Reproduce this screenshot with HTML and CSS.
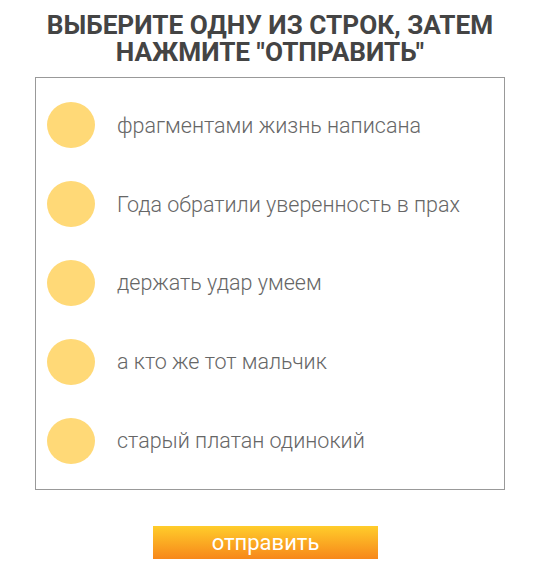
FILE: index.html
```html
<!DOCTYPE html>
<html lang="ru">
<head>
    <meta charset="UTF-8">
    <meta name="viewport" content="width=device-width, initial-scale=1.0">
    <title>Опрос</title>
    <link rel="stylesheet" href="styles.css">
</head>
<body>

    <div class="poll">
        <h2>Выберите одну из строк, затем нажмите "отправить"</h2>

        <div class="options">
            <label class="option"><span class="dot"></span>фрагментами жизнь написана</label>
            <label class="option"><span class="dot"></span>Года обратили уверенность в прах</label>
            <label class="option"><span class="dot"></span>держать удар умеем</label>
            <label class="option"><span class="dot"></span>а кто же тот мальчик</label>
            <label class="option"><span class="dot"></span>старый платан одинокий</label>
        </div>

        <button type="button" class="send">отправить</button>
    </div>

</body>
</html>
```

FILE: styles.css
```css
body {
    font-family: Roboto, "Liberation Sans", sans-serif;
    background-color: #ffffff;
    margin: 0;
}

.poll {
    width: 470px;
    margin: 0 auto;
    padding-top: 12px;
    display: flex;
    flex-direction: column;
    align-items: center;
}

.poll h2 {
    margin: 0 0 11px;
    font-size: 26.2px;
    line-height: 27px;
    font-weight: 700;
    color: #444444;
    text-transform: uppercase;
    text-align: center;
}

.options {
    box-sizing: border-box;
    width: 470px;
    border: 1px solid #999999;
    padding: 8px 11px 9px;
    display: flex;
    flex-direction: column;
}

.option {
    height: 78.8px;
    display: flex;
    align-items: center;
    font-size: 21.5px;
    font-weight: 300;
    color: #666666;
    cursor: pointer;
}

.option .dot {
    width: 48px;
    height: 46px;
    border-radius: 50%;
    background-color: #ffd977;
    margin-right: 22px;
    flex-shrink: 0;
}

.send {
    margin: 36px 9px 0 0;
    width: 225px;
    height: 33px;
    border: none;
    background: linear-gradient(#ffcd2b, #f7871a);
    color: #ffffff;
    font-family: inherit;
    font-size: 22px;
    cursor: pointer;
    padding: 0;
}
```
